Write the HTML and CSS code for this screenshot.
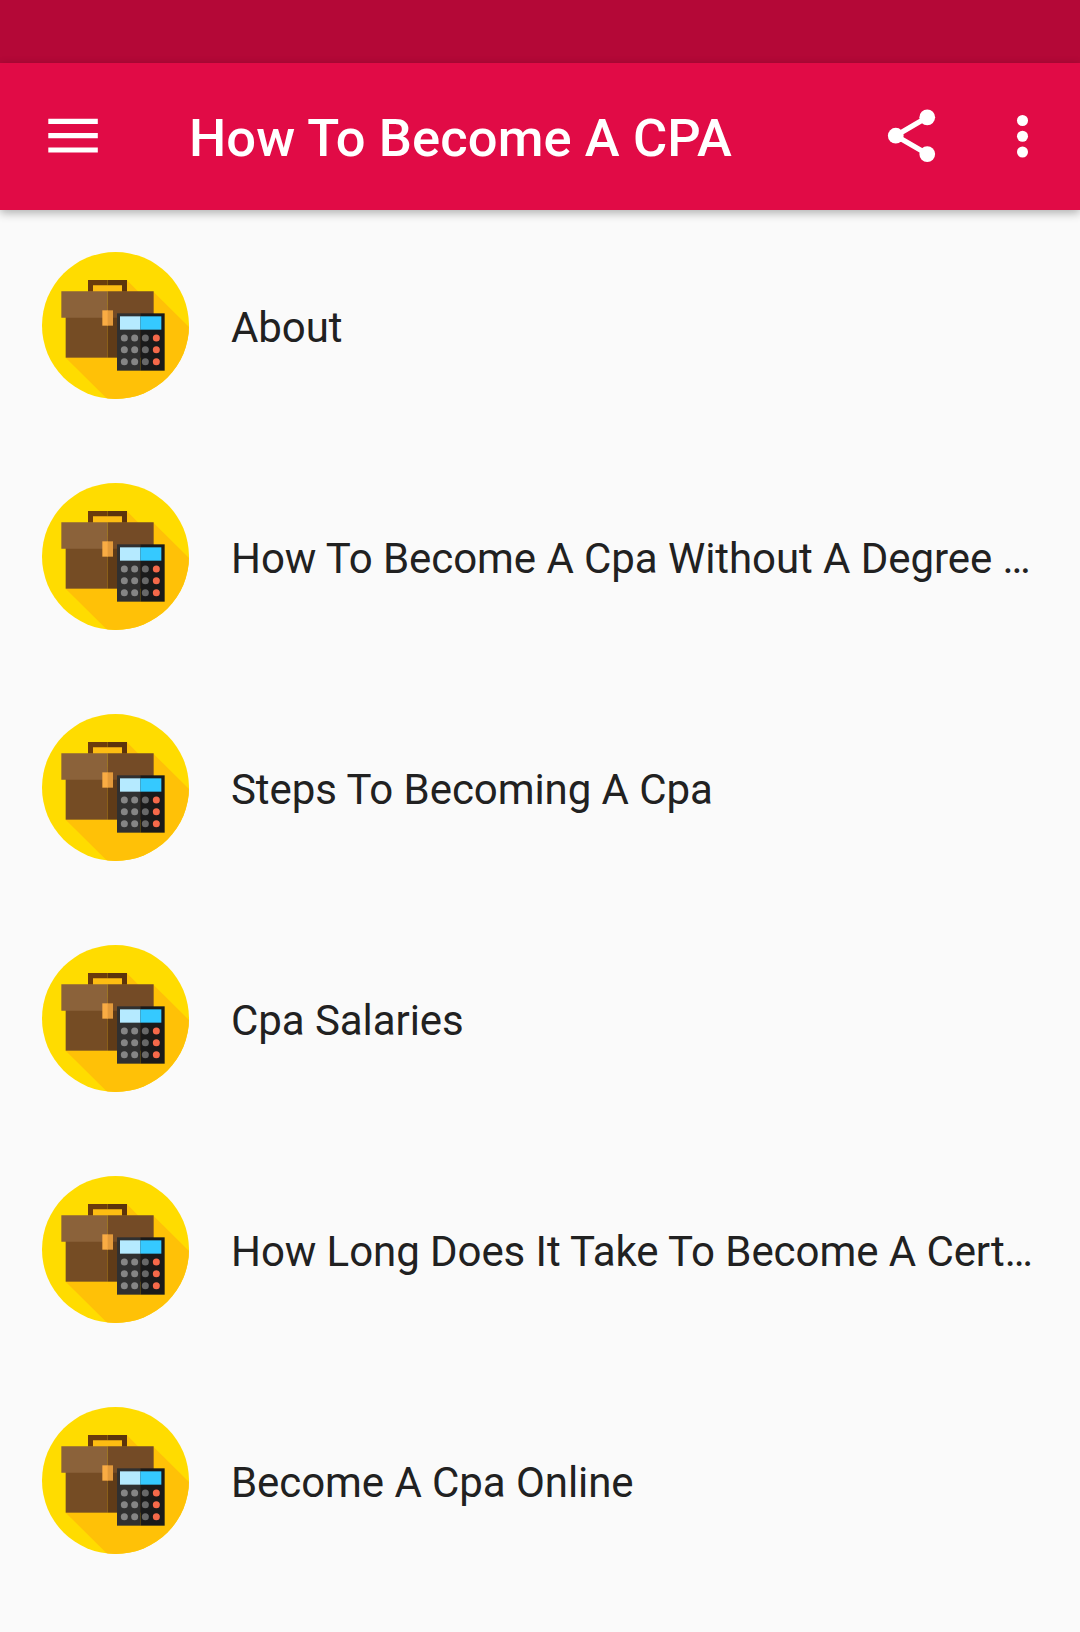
FILE: index.html
```html
<!DOCTYPE html>
<html lang="en">
<head>
    <meta charset="UTF-8">
    <meta name="viewport" content="width=device-width, initial-scale=1.0">
    <title>How To Become A CPA</title>
    <link rel="stylesheet" href="styles.css">
</head>
<body>

<!-- briefcase icon, shared by all the rows -->
<svg class="sprite" width="0" height="0">
    <defs>
        <clipPath id="circle"><circle cx="256.500" cy="256.500" r="220.500"/></clipPath>
    </defs>
    <symbol id="briefcase" viewBox="36 36 441 441">
        <g clip-path="url(#circle)">
            <rect x="36" y="36" width="441" height="441" fill="#ffdc00"/>
            <path d="M291 121L326 156H371L480 264V480H235L107 353Z" fill="#ffc107"/>
        </g>
        <rect x="187" y="134" width="91" height="21" fill="#fdbd12"/>
        <path d="M174 155V120H233V136H189V155Z" fill="#6b3c0c"/>
        <path d="M233 120H291V155H276V136H233Z" fill="#5c340c"/>
        <rect x="107" y="225" width="126" height="128" fill="#754c24"/>
        <rect x="233" y="225" width="126" height="128" fill="#5f3b18"/>
        <path d="M94 154H233V233H94Z" fill="#8b623a"/>
        <path d="M233 154H371V233H233Z" fill="#744b26"/>
        <rect x="217" y="211" width="17" height="46" fill="#f9ac44"/>
        <rect x="233" y="211" width="16" height="46" fill="#e39a3b"/>
        <rect x="261" y="220" width="70" height="172" fill="#303030"/>
        <rect x="331" y="220" width="73" height="172" fill="#1a1a1a"/>
        <rect x="270" y="229" width="61" height="40" fill="#b5eaff"/>
        <rect x="331" y="229" width="63" height="40" fill="#35c9ff"/>
        <g fill="#858585">
            <circle cx="283" cy="294" r="10.500"/><circle cx="314" cy="294" r="10.500"/>
            <circle cx="283" cy="329" r="10.500"/><circle cx="314" cy="329" r="10.500"/>
            <circle cx="283" cy="365" r="10.500"/><circle cx="314" cy="365" r="10.500"/>
        </g>
        <g fill="#686868">
            <circle cx="346" cy="294" r="10.500"/><circle cx="346" cy="329" r="10.500"/><circle cx="346" cy="365" r="10.500"/>
        </g>
        <g fill="#f5694a">
            <circle cx="379" cy="294" r="10.500"/><circle cx="379" cy="329" r="10.500"/><circle cx="379" cy="365" r="10.500"/>
        </g>
    </symbol>
</svg>

<div class="status-bar"></div>
<header class="toolbar">
    <svg class="icon" viewBox="0 0 63 63">
        <path d="M6.300 13.800H55.800V19H6.300ZM6.300 28.100H55.800V33.300H6.300ZM6.300 42.400H55.800V47.600H6.300Z"/>
    </svg>
    <h1>How To Become A CPA</h1>
    <svg class="icon share" viewBox="0 0.300 24 24">
        <path d="M18 5L6 12L18 19" class="line"/>
        <circle cx="18" cy="5" r="3"/>
        <circle cx="6" cy="12" r="3"/>
        <circle cx="18" cy="19" r="3"/>
    </svg>
    <svg class="icon" viewBox="0 0.100 24 24">
        <circle cx="12" cy="6" r="2.100"/>
        <circle cx="12" cy="12" r="2.100"/>
        <circle cx="12" cy="18" r="2.100"/>
    </svg>
</header>

<ul class="list">
    <li><svg class="thumb"><use href="#briefcase"/></svg><span>About</span></li>
    <li><svg class="thumb"><use href="#briefcase"/></svg><span>How To Become A Cpa Without A Degree …</span></li>
    <li><svg class="thumb"><use href="#briefcase"/></svg><span>Steps To Becoming A Cpa</span></li>
    <li><svg class="thumb"><use href="#briefcase"/></svg><span>Cpa Salaries</span></li>
    <li><svg class="thumb"><use href="#briefcase"/></svg><span>How Long Does It Take To Become A Cert…</span></li>
    <li><svg class="thumb"><use href="#briefcase"/></svg><span>Become A Cpa Online</span></li>
</ul>

</body>
</html>
```

FILE: styles.css
```css
body {
    margin: 0;
    background-color: #fafafa;
    color: #212121;
    font-family: Roboto, sans-serif;
}

.sprite {
    display: block;
}

.status-bar {
    height: 63px;
    background-color: #b40837;
}

.toolbar {
    display: flex;
    align-items: center;
    box-sizing: border-box;
    height: 147px;
    padding: 0 26px 0 42px;
    background-color: #e10b46;
    color: #fff;
    box-shadow: 0 3px 9px rgba(0, 0, 0, 0.3);
}

.toolbar h1 {
    flex: 1;
    margin: 0;
    padding: 3px 0 0 84px;
    font-size: 52.5px;
    font-weight: 500;
    letter-spacing: 0.1px;
    white-space: nowrap;
}

.icon {
    width: 63px;
    height: 63px;
    fill: #fff;
}

.icon .line {
    fill: none;
    stroke: #fff;
    stroke-width: 2;
}

.share {
    margin-right: 48px;
}

.list {
    margin: 0;
    padding: 0;
    list-style: none;
}

.list li {
    display: flex;
    align-items: center;
    gap: 42px;
    padding: 42px;
}

.list span {
    padding-top: 4px;
    font-size: 42px;
    letter-spacing: -0.07px;
    white-space: nowrap;
}

.thumb {
    flex: none;
    width: 147px;
    height: 147px;
}
```
